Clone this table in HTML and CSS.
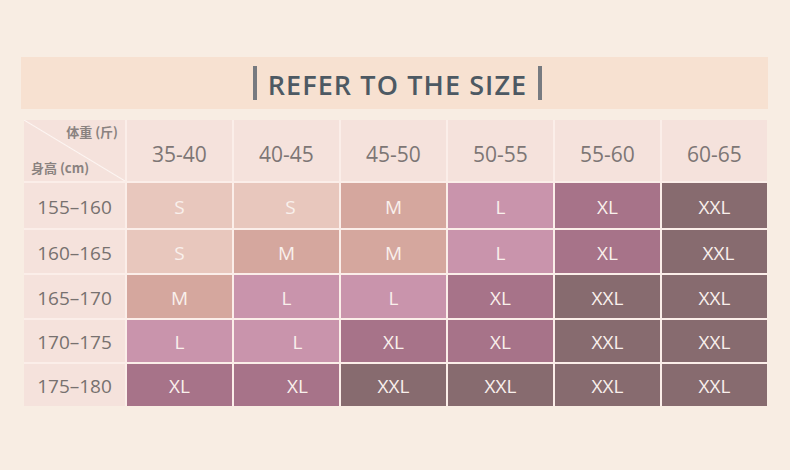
FILE: index.html
```html
<!DOCTYPE html>
<html lang="zh">
<head>
<meta charset="utf-8">
<title>Size chart</title>
<link rel="stylesheet" href="styles.css">
</head>
<body>
<div class="page">
  <div class="banner">
    <span class="bar"></span>
    <h1 class="title">REFER TO THE SIZE</h1>
    <span class="bar"></span>
  </div>
  <div class="chart">
    <div class="corner">
      <span class="corner-top">体重 (斤)</span>
      <span class="corner-bottom">身高 (cm)</span>
    </div>
    <div class="head">35-40</div>
    <div class="head">40-45</div>
    <div class="head">45-50</div>
    <div class="head">50-55</div>
    <div class="head">55-60</div>
    <div class="head">60-65</div>

    <div class="label">155–160</div>
    <div class="cell s">S</div>
    <div class="cell s nudge-s">S</div>
    <div class="cell m">M</div>
    <div class="cell l">L</div>
    <div class="cell xl">XL</div>
    <div class="cell xxl">XXL</div>

    <div class="label">160–165</div>
    <div class="cell s">S</div>
    <div class="cell m">M</div>
    <div class="cell m">M</div>
    <div class="cell l">L</div>
    <div class="cell xl">XL</div>
    <div class="cell xxl nudge-s">XXL</div>

    <div class="label">165–170</div>
    <div class="cell m">M</div>
    <div class="cell l">L</div>
    <div class="cell l">L</div>
    <div class="cell xl">XL</div>
    <div class="cell xxl">XXL</div>
    <div class="cell xxl">XXL</div>

    <div class="label">170–175</div>
    <div class="cell l">L</div>
    <div class="cell l nudge">L</div>
    <div class="cell xl">XL</div>
    <div class="cell xl">XL</div>
    <div class="cell xxl">XXL</div>
    <div class="cell xxl">XXL</div>

    <div class="label">175–180</div>
    <div class="cell xl">XL</div>
    <div class="cell xl nudge">XL</div>
    <div class="cell xxl">XXL</div>
    <div class="cell xxl">XXL</div>
    <div class="cell xxl">XXL</div>
    <div class="cell xxl">XXL</div>
  </div>
</div>
</body>
</html>
```

FILE: styles.css
```css
* { box-sizing: border-box; }
html, body {
  margin: 0;
  padding: 0;
  background: #f8ede3;
}
.page {
  width: 790px;
  height: 470px;
  padding: 57px 22px 0 21px;
  font-family: "Open Sans", "Noto Sans CJK SC", sans-serif;
}
.banner {
  height: 52px;
  background: #f7e1d1;
  display: flex;
  align-items: center;
  justify-content: center;
  gap: 11px;
  padding-left: 6px;
}
.bar {
  width: 3.5px;
  height: 34px;
  background: #777a80;
}
.title {
  margin: 0;
  font-size: 27px;
  font-weight: 600;
  letter-spacing: 1.1px;
  color: #4d5963;
  line-height: 1;
  padding-top: 2px;
}
.chart {
  margin: 11px 0 0 3px;
  width: 743px;
  display: grid;
  grid-template-columns: 101px repeat(6, 105px);
  grid-template-rows: 61px 45px 43px 43px 42px 42px;
  column-gap: 2px;
  row-gap: 2px;
  background: #fbeee9;
}
.corner {
  background:
    linear-gradient(to top right, transparent calc(50% - 1px), #fdf6f3 50%, transparent calc(50% + 1px)),
    #f5e2dc;
  display: flex;
  flex-direction: column;
  justify-content: space-between;
  padding: 3px 7px 4px 7px;
  font-family: "Noto Sans CJK SC", sans-serif;
  font-size: 13px;
  font-weight: 700;
  color: #8a8280;
  line-height: 18px;
}
.corner-top { align-self: flex-end; }
.corner-bottom { align-self: flex-start; }
.head {
  background: #f5e2dc;
  display: flex;
  align-items: center;
  justify-content: center;
  padding-top: 6px;
  font-size: 21px;
  color: #7d7675;
}
.label {
  background: #f5e2dc;
  display: flex;
  align-items: center;
  justify-content: center;
  font-size: 19px;
  color: #77716f;
  padding-top: 2px;
}
.cell {
  display: flex;
  align-items: center;
  justify-content: center;
  font-size: 19px;
  font-weight: 400;
  color: #f9f0ec;
  padding-top: 2px;
}
.nudge { padding-left: 22px; }
.nudge-s { padding-left: 8px; }
.s { background: #e8c7bd; }
.m { background: #d5a79e; }
.l { background: #c994ac; }
.xl { background: #a77389; }
.xxl { background: #876b6f; }
```
